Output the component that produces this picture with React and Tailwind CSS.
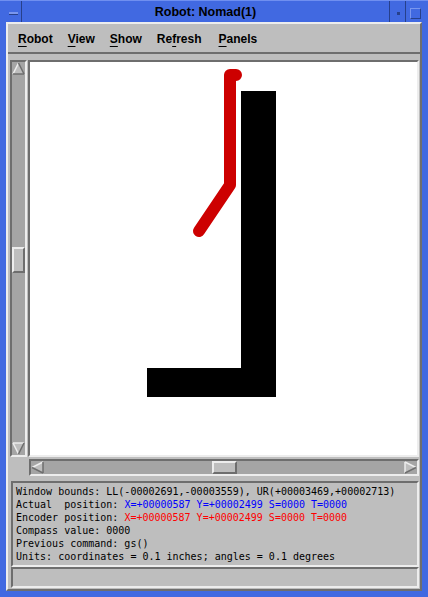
import React from 'react';

function ArrowUp() {
  return (
    <svg width="13" height="13" viewBox="0 0 13 13" className="block">
      <polygon points="6.5,1 1,12 12,12" fill="#bebebe" />
      <line x1="1" y1="12" x2="6.5" y2="1" stroke="#ededed" strokeWidth="1.5" />
      <line x1="6.5" y1="1" x2="12" y2="12" stroke="#6e6e6e" strokeWidth="1.5" />
      <line x1="1" y1="12" x2="12" y2="12" stroke="#6e6e6e" strokeWidth="1.5" />
    </svg>
  );
}

function ArrowDown() {
  return (
    <svg width="13" height="13" viewBox="0 0 13 13" className="block">
      <polygon points="1,1 12,1 6.5,12" fill="#bebebe" />
      <line x1="1" y1="1" x2="12" y2="1" stroke="#ededed" strokeWidth="1.5" />
      <line x1="1" y1="1" x2="6.5" y2="12" stroke="#ededed" strokeWidth="1.5" />
      <line x1="12" y1="1" x2="6.5" y2="12" stroke="#6e6e6e" strokeWidth="1.5" />
    </svg>
  );
}

function ArrowLeft() {
  return (
    <svg width="13" height="13" viewBox="0 0 13 13" className="block">
      <polygon points="1,6.5 12,1 12,12" fill="#bebebe" />
      <line x1="1" y1="6.5" x2="12" y2="1" stroke="#ededed" strokeWidth="1.5" />
      <line x1="1" y1="6.5" x2="12" y2="12" stroke="#6e6e6e" strokeWidth="1.5" />
      <line x1="12" y1="1" x2="12" y2="12" stroke="#6e6e6e" strokeWidth="1.5" />
    </svg>
  );
}

function ArrowRight() {
  return (
    <svg width="13" height="13" viewBox="0 0 13 13" className="block">
      <polygon points="12,6.5 1,1 1,12" fill="#bebebe" />
      <line x1="1" y1="1" x2="1" y2="12" stroke="#ededed" strokeWidth="1.5" />
      <line x1="1" y1="1" x2="12" y2="6.5" stroke="#ededed" strokeWidth="1.5" />
      <line x1="1" y1="12" x2="12" y2="6.5" stroke="#6e6e6e" strokeWidth="1.5" />
    </svg>
  );
}

function MenuItem({ before = '', letter, after }) {
  return (
    <span>
      {before}
      <span className="underline decoration-1 underline-offset-[3px]">{letter}</span>
      {after}
    </span>
  );
}

export default function App() {
  return (
    <div className="w-[428px] h-[597px] bg-[#4169e1] flex flex-col overflow-hidden font-['Liberation_Sans',Arial,sans-serif] text-black">
      {/* title bar */}
      <div className="h-[22px] flex border-t border-[#6f8ff0]">
        <div className="w-[22px] border-r border-[#27408b] pl-[9px] pt-[11px]">
          <div className="w-[9px] h-[3px] bg-[#7a96ee] border-b border-[#27408b]" />
        </div>
        <div className="flex-1 flex items-center justify-center text-[12.5px] font-bold leading-none pt-[2px]">
          Robot: Nomad(1)
        </div>
        <div className="w-[16px] border-l border-[#27408b] pl-[7px] pt-[11px]">
          <div className="w-[3px] h-[3px] bg-[#27408b]" />
        </div>
        <div className="w-[23px] border-l border-[#27408b] pl-[4px] pt-[7px]">
          <div className="w-[11px] h-[11px] border border-t-[#7a96ee] border-l-[#7a96ee] border-b-[#27408b] border-r-[#27408b]" />
        </div>
      </div>

      {/* client area */}
      <div className="h-[569px] mx-[6px] bg-[#bebebe] border-t-2 border-l-2 border-r-2 border-b-2 border-t-[#ededed] border-l-[#ededed] border-r-[#6e6e6e] border-b-[#6e6e6e] flex flex-col">
        {/* menu bar */}
        <div className="h-[30px] border-b-2 border-[#6e6e6e] flex items-start gap-[15px] pl-[10px] pt-[8px] text-[12px] leading-[14px] font-bold">
          <MenuItem letter="R" after="obot" />
          <MenuItem letter="V" after="iew" />
          <MenuItem letter="S" after="how" />
          <MenuItem before="Re" letter="f" after="resh" />
          <span className="ml-[2px]">
            <MenuItem letter="P" after="anels" />
          </span>
        </div>

        {/* body */}
        <div className="pl-[2px] pr-[1px] pt-[6px] flex flex-col">
          <div className="flex h-[397px] gap-[1px]">
            {/* vertical scrollbar */}
            <div className="w-[17px] border-2 border-t-[#6e6e6e] border-l-[#6e6e6e] border-b-[#ededed] border-r-[#ededed] bg-[#a5a5a5] flex flex-col">
              <ArrowUp />
              <div className="h-[172px]" />
              <div className="h-[26px] bg-[#bebebe] border-2 border-t-[#ededed] border-l-[#ededed] border-b-[#6e6e6e] border-r-[#6e6e6e]" />
              <div className="flex-1" />
              <ArrowDown />
            </div>
            {/* canvas */}
            <div className="w-[391px] border-2 border-t-[#6e6e6e] border-l-[#6e6e6e] border-b-[#ededed] border-r-[#ededed] bg-white">
              <svg width="387" height="393" viewBox="30 62 387 393" className="block">
                <polygon points="241,91 276,91 276,397 147,397 147,368 241,368" fill="#000000" />
                <path
                  d="M236 75 L230 75 L230 185 L199 231"
                  fill="none"
                  stroke="#cd0000"
                  strokeWidth="12"
                  strokeLinecap="round"
                  strokeLinejoin="round"
                />
              </svg>
            </div>
          </div>

          {/* horizontal scrollbar */}
          <div className="ml-[19px] mt-[2px] w-[390px] h-[17px] border-2 border-t-[#6e6e6e] border-l-[#6e6e6e] border-b-[#ededed] border-r-[#ededed] bg-[#a5a5a5] flex">
            <ArrowLeft />
            <div className="w-[168px]" />
            <div className="w-[25px] bg-[#bebebe] border-2 border-t-[#ededed] border-l-[#ededed] border-b-[#6e6e6e] border-r-[#6e6e6e]" />
            <div className="flex-1" />
            <ArrowRight />
          </div>

          {/* status text */}
          <div className="ml-[1px] mt-[5px] w-[408px] h-[86px] border-2 border-t-[#6e6e6e] border-l-[#6e6e6e] border-b-[#ededed] border-r-[#ededed] pl-[3px] pt-[2px] font-['DejaVu_Sans_Mono',monospace] text-[10px] leading-[13px] whitespace-pre">
            <div>Window bounds: LL(-00002691,-00003559), UR(+00003469,+00002713)</div>
            <div>
              Actual  position: <span className="text-[#0000ff]">X=+00000587 Y=+00002499 S=0000 T=0000</span>
            </div>
            <div>
              Encoder position: <span className="text-[#ff0000]">X=+00000587 Y=+00002499 S=0000 T=0000</span>
            </div>
            <div>Compass value: 0000</div>
            <div>Previous command: gs()</div>
            <div>Units: coordinates = 0.1 inches; angles = 0.1 degrees</div>
          </div>

          {/* empty message line */}
          <div className="ml-[1px] w-[408px] h-[21px] border-2 border-t-[#6e6e6e] border-l-[#6e6e6e] border-b-[#ededed] border-r-[#ededed]" />
        </div>
      </div>
    </div>
  );
}
